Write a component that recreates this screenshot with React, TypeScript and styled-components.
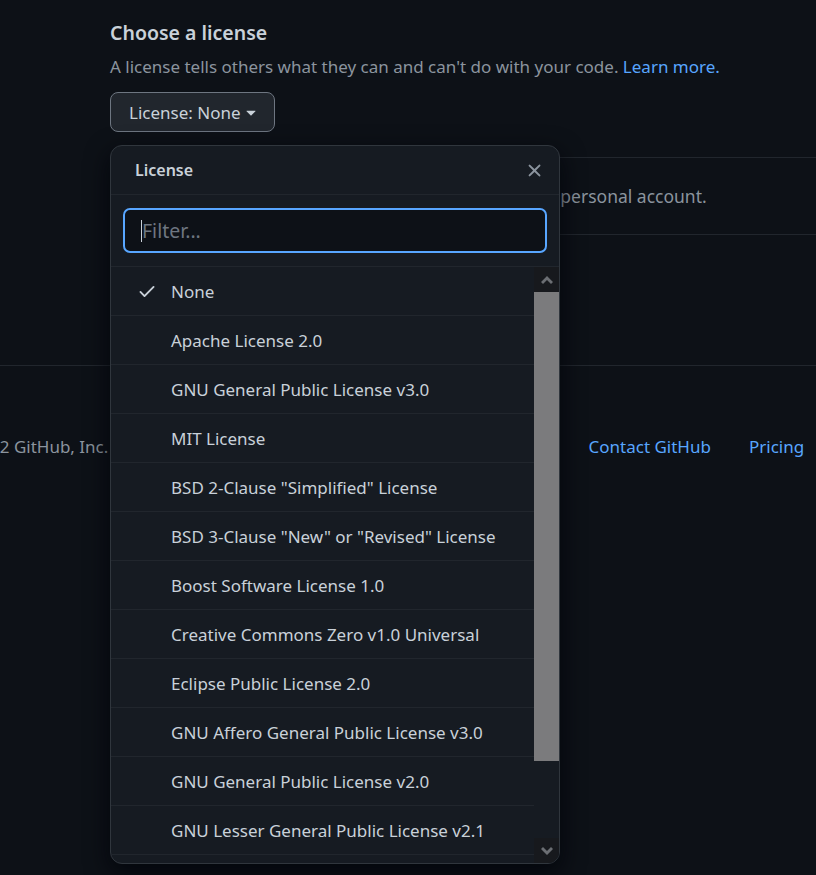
import * as React from 'react'
import styled, { createGlobalStyle } from 'styled-components'

const GlobalStyle = createGlobalStyle`
  html, body {
    margin: 0;
    padding: 0;
    background: #0d1117;
    overflow: hidden;
  }
  body {
    font-family: 'Noto Sans', 'Liberation Sans', sans-serif;
    color: #c9d1d9;
  }
  * {
    box-sizing: border-box;
  }
`

const licenses = [
  'None',
  'Apache License 2.0',
  'GNU General Public License v3.0',
  'MIT License',
  'BSD 2-Clause "Simplified" License',
  'BSD 3-Clause "New" or "Revised" License',
  'Boost Software License 1.0',
  'Creative Commons Zero v1.0 Universal',
  'Eclipse Public License 2.0',
  'GNU Affero General Public License v3.0',
  'GNU General Public License v2.0',
  'GNU Lesser General Public License v2.1',
  'Mozilla Public License 2.0',
  'The Unlicense',
]

const footerLinks = [
  'Terms',
  'Privacy',
  'Security',
  'Status',
  'Docs',
  'Contact GitHub',
  'Pricing',
  'API',
]

const Page = styled.div`
  width: 816px;
  height: 875px;
  overflow: hidden;
`

const Main = styled.main`
  padding: 19px 0 0 110px;
`

const Title = styled.h2`
  margin: 0;
  font-size: 19.5px;
  line-height: 28px;
  font-weight: 600;
  color: #c9d1d9;
`

const Description = styled.p`
  margin: 8px 0 0;
  font-size: 17px;
  line-height: 24px;
  color: #8b949e;
`

const Link = styled.a`
  color: #58a6ff;
  text-decoration: none;
`

const MenuAnchor = styled.div`
  position: relative;
  margin-top: 13px;
  display: inline-block;
`

const SummaryButton = styled.button`
  display: inline-flex;
  align-items: center;
  height: 40px;
  padding: 0 13px 0 18px;
  font-family: inherit;
  font-size: 17px;
  color: #c9d1d9;
  background: #21262d;
  border: 1px solid #6e7681;
  border-radius: 8px;
`

const Notice = styled.div`
  margin-top: 25px;
  height: 78px;
  display: flex;
  align-items: center;
  gap: 10px;
  padding-left: 63px;
  border-top: 1px solid #21262d;
  border-bottom: 1px solid #21262d;
  font-size: 17.5px;
  color: #8b949e;
  white-space: nowrap;
`

const Footer = styled.footer`
  margin-top: 130px;
  border-top: 1px solid #21262d;
  padding-top: 69px;
  display: flex;
  align-items: center;
  font-size: 17px;
  white-space: nowrap;
`

const Copyright = styled.span`
  margin-left: -48px;
  color: #8b949e;
`

const FooterLinks = styled.nav`
  display: flex;
  gap: 38px;
  margin-left: 32px;
`

const Menu = styled.div`
  position: absolute;
  top: 53px;
  left: 0;
  width: 450px;
  height: 719px;
  display: flex;
  flex-direction: column;
  background: #161b22;
  border: 1px solid #30363d;
  border-radius: 12px;
  overflow: hidden;
  box-shadow: 0 8px 24px rgba(1, 4, 9, 0.85);
  z-index: 10;
`

const MenuHeader = styled.header`
  display: flex;
  align-items: center;
  justify-content: space-between;
  height: 49px;
  padding: 0 14px 0 24px;
  border-bottom: 1px solid #21262d;
`

const MenuTitle = styled.span`
  font-size: 16px;
  font-weight: 600;
  color: #c9d1d9;
`

const CloseButton = styled.button`
  display: flex;
  padding: 0;
  background: none;
  border: 0;
  color: #8b949e;
`

const FilterBox = styled.div`
  position: relative;
  padding: 13px 12px;
  border-bottom: 1px solid #21262d;
`

const FilterInput = styled.input`
  width: 100%;
  height: 45px;
  padding: 0 17px;
  font-family: inherit;
  font-size: 19.5px;
  color: #c9d1d9;
  background: #0d1117;
  border: 2px solid #58a6ff;
  border-radius: 7px;
  outline: none;
  caret-color: transparent;

  &::placeholder {
    color: #6e7681;
  }
`

const Caret = styled.span`
  position: absolute;
  left: 30px;
  top: 25px;
  width: 1px;
  height: 22px;
  background: #c9d1d9;
`

const ListArea = styled.div`
  flex: 1;
  min-height: 0;
  display: flex;
`

const List = styled.div`
  flex: 1;
  overflow: hidden;
`

const Item = styled.div`
  display: flex;
  align-items: center;
  height: 49px;
  padding-left: 26px;
  border-bottom: 1px solid #21262d;
  font-size: 17px;
  color: #c9d1d9;
`

const CheckSlot = styled.span<{ $on: boolean }>`
  display: flex;
  width: 34px;
  color: #c9d1d9;
  visibility: ${p => (p.$on ? 'visible' : 'hidden')};
`

const Rail = styled.div`
  width: 25px;
  display: flex;
  flex-direction: column;
  background: #161b22;
`

const RailButton = styled.div`
  height: 25px;
  display: flex;
  align-items: center;
  justify-content: center;
  background: #17191d;
  color: #6b6e73;
`

const Thumb = styled.div`
  height: 469px;
  background: #7b7b7d;
`

const RailSpace = styled.div`
  flex: 1;
`

function CheckIcon() {
  return (
    <svg width="20" height="20" viewBox="0 0 16 16" fill="currentColor">
      <path d="M13.78 4.22a.75.75 0 0 1 0 1.06l-7.25 7.25a.75.75 0 0 1-1.06 0L2.22 9.28a.751.751 0 0 1 .018-1.042.751.751 0 0 1 1.042-.018L6 10.94l6.72-6.72a.75.75 0 0 1 1.06 0Z" />
    </svg>
  )
}

function XIcon() {
  return (
    <svg width="21" height="21" viewBox="0 0 16 16" fill="currentColor">
      <path d="M3.72 3.72a.75.75 0 0 1 1.06 0L8 6.94l3.22-3.22a.749.749 0 0 1 1.275.326.749.749 0 0 1-.215.734L9.06 8l3.22 3.22a.749.749 0 0 1-.326 1.275.749.749 0 0 1-.734-.215L8 9.06l-3.22 3.22a.751.751 0 0 1-1.042-.018.751.751 0 0 1-.018-1.042L6.94 8 3.72 4.78a.75.75 0 0 1 0-1.06Z" />
    </svg>
  )
}

function TriangleDown() {
  return (
    <svg width="20" height="20" viewBox="0 0 16 16" fill="currentColor">
      <path d="m4.427 7.427 3.396 3.396a.25.25 0 0 0 .354 0l3.396-3.396A.25.25 0 0 0 11.396 7H4.604a.25.25 0 0 0-.177.427Z" />
    </svg>
  )
}

function Chevron({ up }: { up?: boolean }) {
  return (
    <svg width="12" height="8" viewBox="0 0 12 8" fill="currentColor">
      {up ? (
        <path d="M6 0 12 6 10 8 6 4 2 8 0 6Z" />
      ) : (
        <path d="M6 8 0 2 2 0 6 4 10 0 12 2Z" />
      )}
    </svg>
  )
}

function InfoIcon() {
  return (
    <svg width="20" height="20" viewBox="0 0 16 16" fill="currentColor">
      <path d="M0 8a8 8 0 1 1 16 0A8 8 0 0 1 0 8Zm8-6.5a6.5 6.5 0 1 0 0 13 6.5 6.5 0 0 0 0-13ZM6.5 7.75A.75.75 0 0 1 7.25 7h1a.75.75 0 0 1 .75.75v2.75h.25a.75.75 0 0 1 0 1.5h-2a.75.75 0 0 1 0-1.5h.25v-2h-.25a.75.75 0 0 1-.75-.75ZM8 6a1 1 0 1 1 0-2 1 1 0 0 1 0 2Z" />
    </svg>
  )
}

export default function App() {
  const selected = 'None'
  return (
    <Page>
      <GlobalStyle />
      <Main>
        <Title>Choose a license</Title>
        <Description>
          A license tells others what they can and can't do with your code.{' '}
          <Link href="#">Learn more.</Link>
        </Description>
        <MenuAnchor>
          <SummaryButton>
            License: None
            <TriangleDown />
          </SummaryButton>
          <Menu role="dialog" aria-label="License">
            <MenuHeader>
              <MenuTitle>License</MenuTitle>
              <CloseButton aria-label="Close menu">
                <XIcon />
              </CloseButton>
            </MenuHeader>
            <FilterBox>
              <FilterInput placeholder="Filter..." />
              <Caret />
            </FilterBox>
            <ListArea>
              <List>
                {licenses.map(name => (
                  <Item key={name}>
                    <CheckSlot $on={name === selected}>
                      <CheckIcon />
                    </CheckSlot>
                    {name}
                  </Item>
                ))}
              </List>
              <Rail>
                <RailButton>
                  <Chevron up />
                </RailButton>
                <Thumb />
                <RailSpace />
                <RailButton>
                  <Chevron />
                </RailButton>
              </Rail>
            </ListArea>
          </Menu>
        </MenuAnchor>
        <Notice>
          <InfoIcon />
          You are creating a public repository in your personal account.
        </Notice>
      </Main>
      <Footer>
        <Copyright>© 2022 GitHub, Inc.</Copyright>
        <FooterLinks>
          {footerLinks.map(l => (
            <Link key={l} href="#">
              {l}
            </Link>
          ))}
        </FooterLinks>
      </Footer>
    </Page>
  )
}
